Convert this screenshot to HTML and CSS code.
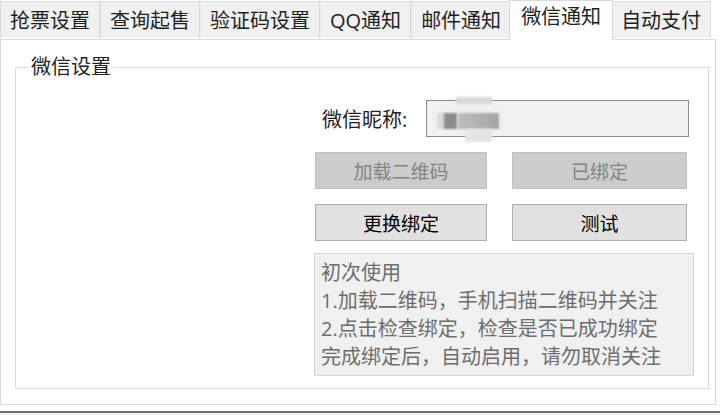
FILE: index.html
```html
<!DOCTYPE html>
<html lang="zh-CN">
<head>
    <meta charset="UTF-8">
    <title>微信通知</title>
    <link rel="stylesheet" href="styles.css">
</head>
<body>
    <div class="window">
        <ul class="tabs">
            <li class="tab">抢票设置</li>
            <li class="tab">查询起售</li>
            <li class="tab">验证码设置</li>
            <li class="tab">QQ通知</li>
            <li class="tab">邮件通知</li>
            <li class="tab active">微信通知</li>
            <li class="tab">自动支付</li>
        </ul>

        <div class="page">
            <fieldset class="group">
                <legend>微信设置</legend>
                <div class="wechat">
                    <div class="nick-row">
                        <label for="nick">微信昵称:</label>
                        <div class="nick-input" id="nick">
                            <!-- nickname is masked -->
                            <span class="mask mask-top"></span>
                            <span class="mask mask-a"></span>
                            <span class="mask mask-b"></span>
                            <span class="mask mask-c"></span>
                            <span class="mask mask-bottom"></span>
                        </div>
                    </div>
                    <div class="btn-grid">
                        <button class="btn" disabled>加载二维码</button>
                        <button class="btn" disabled>已绑定</button>
                        <button class="btn">更换绑定</button>
                        <button class="btn">测试</button>
                    </div>
                    <div class="tips">
                        初次使用<br>
                        1.加载二维码，手机扫描二维码并关注<br>
                        2.点击检查绑定，检查是否已成功绑定<br>
                        完成绑定后，自动启用，请勿取消关注
                    </div>
                </div>
            </fieldset>
        </div>

        <div class="statusbar"></div>
    </div>
</body>
</html>
```

FILE: styles.css
```css
html, body {
    margin: 0;
    height: 100%;
    overflow: hidden;
    background: #fff;
    font-family: "Open Sans", "Noto Sans CJK SC", sans-serif;
    font-size: 20px;
    color: #1e1e1e;
}
.window {
    display: flex;
    flex-direction: column;
    width: 720px;
    height: 415px;
}

/* tab strip */
.tabs {
    display: flex;
    align-items: flex-end;
    list-style: none;
    margin: 0;
    padding: 0;
    height: 39px;
    position: relative;
    z-index: 1;
}
.tab {
    box-sizing: border-box;
    height: 37px;
    padding: 0 9px;
    line-height: 37px;
    background: #f0f0f0;
    border: 1px solid #d9d9d9;
    border-bottom: none;
    white-space: nowrap;
    margin-bottom: 1px;
}
.tab + .tab {
    border-left-color: #e6e6e6;
}
.tab.active {
    height: 40px;
    margin: 0 -2px -1px -2px;
    padding: 0 11px;
    line-height: 32px;
    background: #fff;
    border-left-color: #d9d9d9;
    position: relative;
    z-index: 2;
}

/* page under the tabs */
.page {
    box-sizing: border-box;
    width: 716px;
    height: 366px;
    border: 1px solid #d9d9d9;
    background: #fff;
    display: flex;
    flex-direction: column;
}
.group {
    flex: 1;
    margin: 14px 6px 15px 14px;
    padding: 0 14px 0 0;
    border: 1px solid #dcdcdc;
    min-width: 0;
}
.group legend {
    margin-left: 13px;
    padding: 0 2px;
    line-height: 26px;
    color: #222;
}
.wechat {
    width: 380px;
    margin-left: auto;
    padding-top: 20px;
}

/* nickname */
.nick-row {
    display: flex;
    align-items: center;
    padding: 0 5px 0 8px;
}
.nick-row label {
    width: 104px;
    color: #222;
}
.nick-input {
    flex: 1;
    height: 37px;
    box-sizing: border-box;
    border: 1px solid #8c8c8c;
    background: #f0f0f0;
    position: relative;
}
.mask {
    position: absolute;
    filter: blur(1.2px);
}
.mask-top {
    left: 29px;
    top: -4px;
    width: 36px;
    height: 7px;
    background: #d8d8d8;
}
.mask-a {
    left: 10px;
    top: 12px;
    width: 8px;
    height: 16px;
    background: #dadada;
}
.mask-b {
    left: 17px;
    top: 12px;
    width: 13px;
    height: 16px;
    background: #8c8c8c;
}
.mask-c {
    left: 31px;
    top: 12px;
    width: 41px;
    height: 16px;
    background: linear-gradient(90deg, #bdbdbd, #a4a4a4);
}
.mask-bottom {
    left: 38px;
    top: 28px;
    width: 27px;
    height: 13px;
    background: #e4e4e4;
}

/* buttons */
.btn-grid {
    display: grid;
    grid-template-columns: 172px 175px;
    grid-auto-rows: 37px;
    column-gap: 25px;
    row-gap: 15px;
    margin-top: 15px;
    padding-left: 1px;
}
.btn {
    font-family: inherit;
    font-size: 19px;
    color: #000;
    background: #e1e1e1;
    border: 1px solid #adadad;
    padding: 0;
}
.btn:disabled {
    color: #838383;
    background: #cccccc;
    border-color: #bfbfbf;
}

/* help text */
.tips {
    margin-top: 12px;
    padding: 5px 6px 4px;
    line-height: 28px;
    color: #6d6d6d;
    background: #f0f0f0;
    border: 1px solid #d6d6d6;
    white-space: nowrap;
}

.statusbar {
    flex: 1;
    margin-top: 6px;
    border-top: 2px solid #6e6e6e;
    background: #f0f0f0;
}
```
